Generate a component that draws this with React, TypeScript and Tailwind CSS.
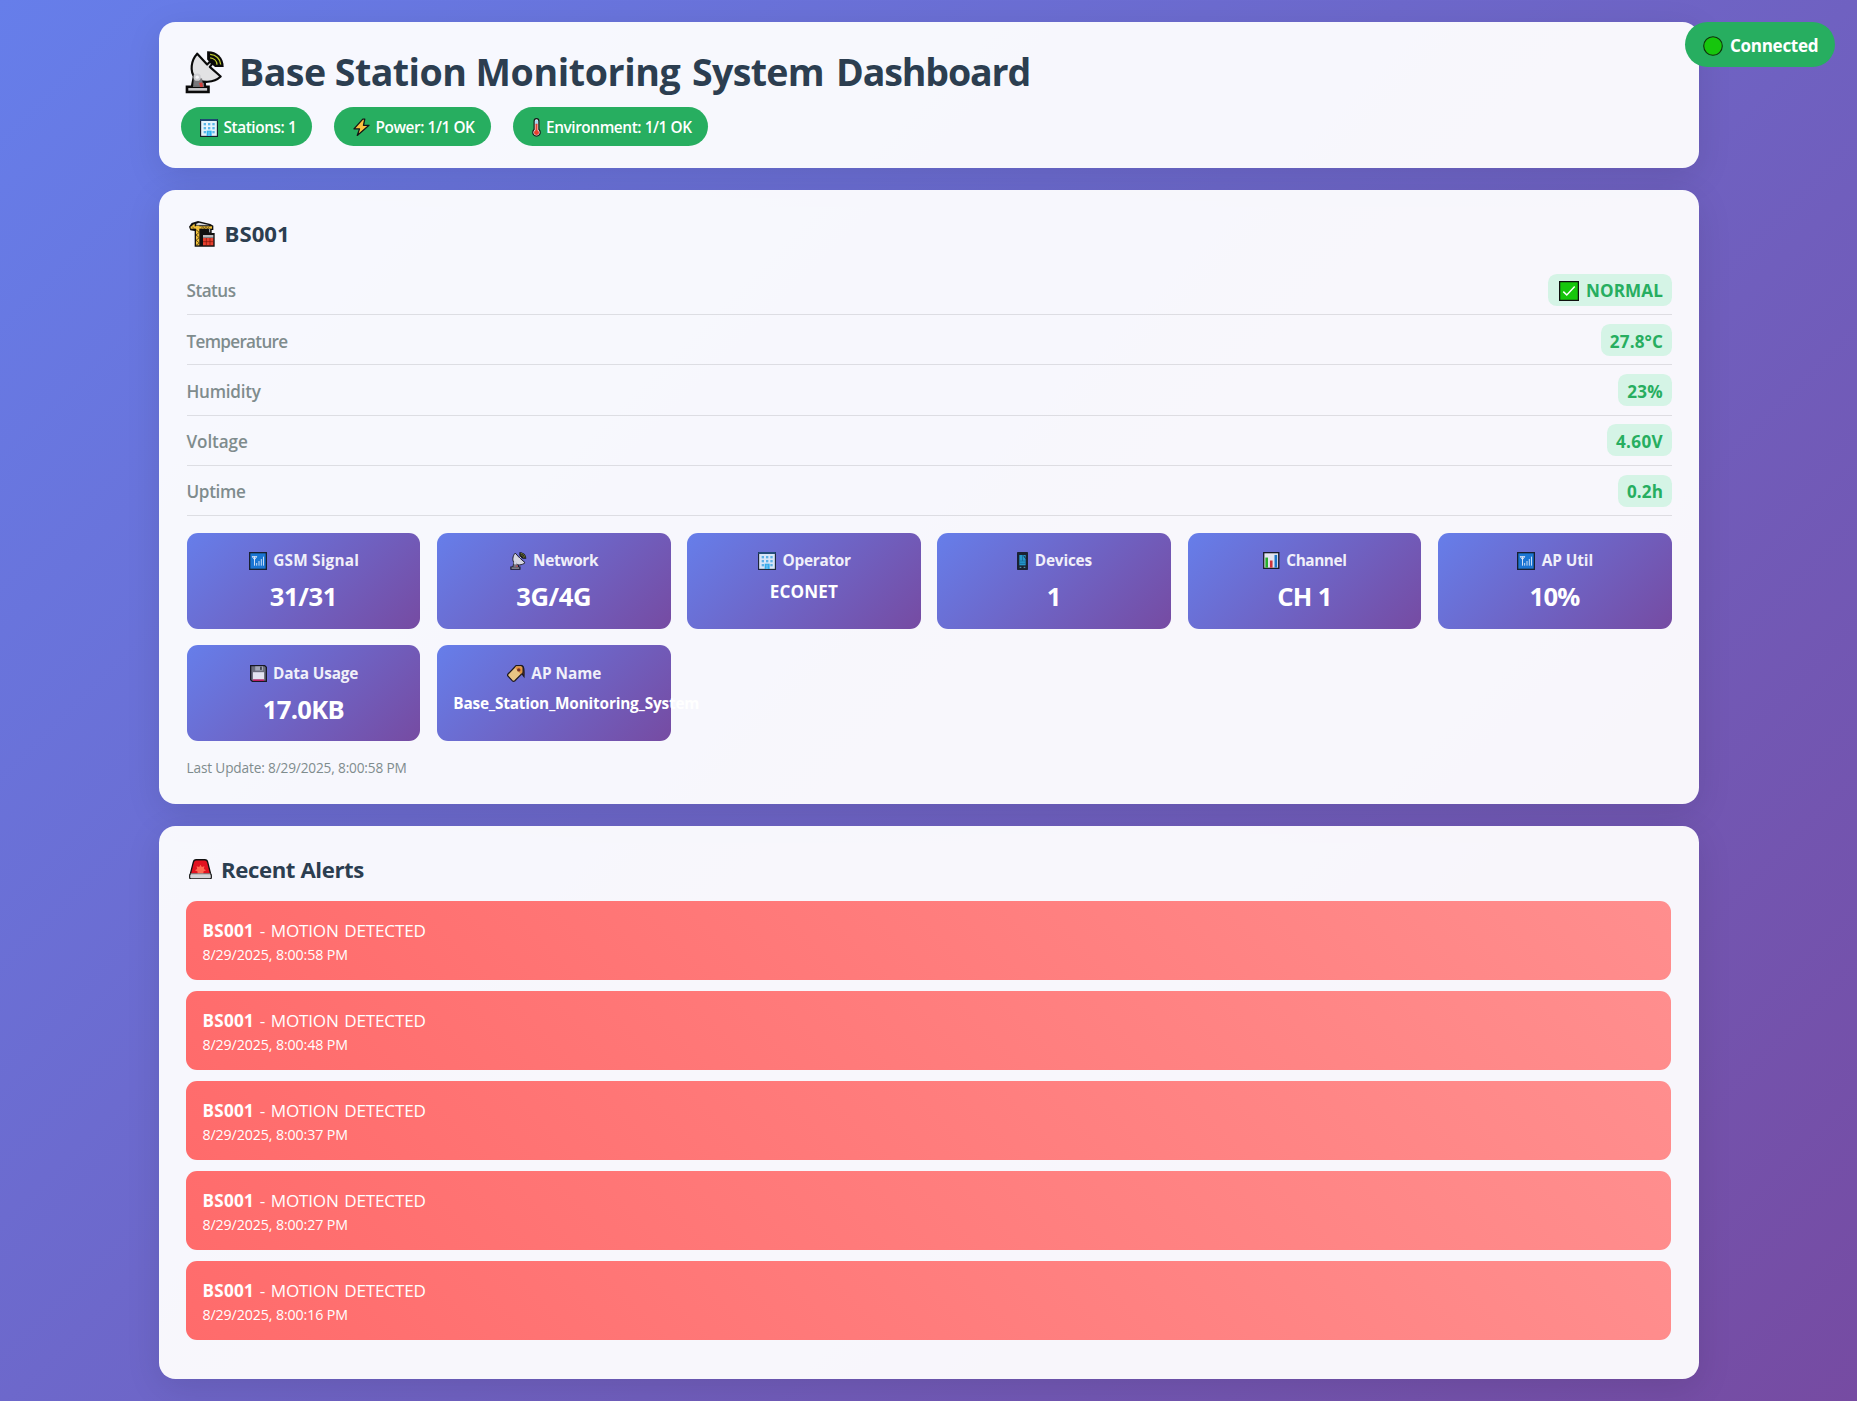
import React from "react";

type IconProps = { className?: string };

function DishIcon({ className = "" }: IconProps) {
  return (
    <svg viewBox="30 34 118 130" className={className} aria-hidden="true">
      <path d="M97 35 C126 34 147 53 147 82 L121 82 L108 72 L97 60 Z" fill="#0a0a0a" />
      <path d="M106 44 C124 45 137 58 138 75" fill="none" stroke="#c3cf2e" strokeWidth="4" />
      <path d="M106 55 C117 56 126 64 127 75" fill="none" stroke="#c3cf2e" strokeWidth="4" />
      <path d="M54 108 L48 138 L32 138 L32 162 L105 162 L105 138 L94 138 L92 118 Z" fill="#0a0a0a" />
      <path d="M60 112 L54 143 L88 143 L86 118 Z" fill="#6f6f72" />
      <path d="M72 131 L82 129 L84 143 L76 143 Z" fill="#d4403c" />
      <path d="M40 146 H97 V154 H40 Z" fill="#c9c9cc" />
      <path d="M67 42 C48 62 44 96 60 114 C80 134 118 130 138 111 L105 82 L113 72 L106 66 L97 75 Z" fill="#e2e2e4" stroke="#0a0a0a" strokeWidth="6.5" strokeLinejoin="round" />
      <path d="M56 104 L82 118 L84 138 L56 138 Z" fill="#77777b" />
      <path d="M72 131 L82 129 L84 140 L76 140 Z" fill="#d4403c" />
      <circle cx="67" cy="113" r="11" fill="#cfcfd3" />
      <circle cx="67" cy="113" r="5" fill="#f3f3f5" />
    </svg>
  );
}

function BuildingIcon({ className = "" }: IconProps) {
  const cols = [11, 24, 37];
  return (
    <svg viewBox="0 0 54 54" className={className} aria-hidden="true">
      <rect x="1.5" y="1.5" width="51" height="51" fill="#e4f3fc" stroke="#16202b" strokeWidth="4" />
      <rect x="1" y="0" width="52" height="6" fill="#1d4a72" />
      {[12, 24, 36].map((y) =>
        cols.map((x) => <rect key={`${x}-${y}`} x={x} y={y} width="7" height="7" fill="#5bb8ea" />)
      )}
      <path d="M20 35 H35 V51 H20 Z" fill="#2fb4ef" />
      <path d="M27 38 V51" stroke="#b8e6fb" strokeWidth="2" />
    </svg>
  );
}

function BoltIcon({ className = "" }: IconProps) {
  return (
    <svg viewBox="0 0 52 56" className={className} aria-hidden="true">
      <path d="M30 3 L3 33 L20 33 L13 53 L49 22 L32 22 L36 3 Z" fill="#fcc23f" stroke="#151515" strokeWidth="4" strokeLinejoin="round" />
    </svg>
  );
}

function ThermometerIcon({ className = "" }: IconProps) {
  return (
    <svg viewBox="0 0 26 56" className={className} aria-hidden="true">
      <path d="M6 9 a7 7 0 0 1 14 0 V34 a11 11 0 1 1 -14 0 Z" fill="#f1f3f5" stroke="#151515" strokeWidth="3.4" />
      <path d="M9 7 H17 V20 H9 Z" fill="#9ed8f3" />
      <path d="M10 17 H16 V36 a7.4 7.4 0 1 1 -6 0 Z" fill="#e6402f" />
    </svg>
  );
}

function CraneIcon({ className = "" }: IconProps) {
  return (
    <svg viewBox="0 0 78 78" className={className} aria-hidden="true">
      <path d="M0 17 L8 6 L27 0 L64 9 L73 14 V27 H68 V36 H77 V77 H17 V30 L4 28 Z" fill="#101010" />
      <path d="M5 20 L12 11 L17 9 V21 Z" fill="#f3c13a" />
      <path d="M22 8 L30 5 L62 13 H22 Z" fill="#d7d7d9" />
      <rect x="5" y="16" width="64" height="7" fill="#f3c13a" />
      <path d="M10 17 l5 6 M36 23 l5 -6 l5 6 l5 -6 l5 6 l5 -6" stroke="#3c2f0a" strokeWidth="2" fill="none" />
      <rect x="21" y="14" width="10" height="59" fill="#f3c13a" />
      <path d="M21 26 L31 34 L21 42 L31 50 L21 58 L31 66 L21 73" stroke="#3c2f0a" strokeWidth="2.2" fill="none" />
      <path d="M36 28 H57 V36 L52 40 H38 V46 H36 Z" fill="#101010" />
      <path d="M62 24 V34" stroke="#b9b9bd" strokeWidth="3" />
      <rect x="42" y="42" width="31" height="8" fill="#b9b9bd" />
      <rect x="42" y="51" width="31" height="22" fill="#e8412f" />
      <path d="M42 62 H73 M52 51 V73 M63 51 V73" stroke="#7d160c" strokeWidth="2" />
    </svg>
  );
}

function CheckIcon({ className = "" }: IconProps) {
  return (
    <svg viewBox="0 0 20 20" className={className} aria-hidden="true">
      <rect x="0.6" y="0.6" width="18.8" height="18.8" fill="#16c60c" stroke="#101010" strokeWidth="1.3" />
      <path d="M4.3 10.6 L7.8 14 L15.7 5.6" fill="none" stroke="#fff" strokeWidth="1.5" />
    </svg>
  );
}

function SignalIcon({ className = "" }: IconProps) {
  return (
    <svg viewBox="0 0 54 54" className={className} aria-hidden="true">
      <rect x="2" y="2" width="50" height="50" fill="#1377d4" stroke="#101820" strokeWidth="4" />
      <path d="M9 14 H24 M10 14 L16.5 23 L23 14 M16.5 14 V41" stroke="#fff" strokeWidth="2.6" fill="none" />
      <path d="M23 41 V33 M30 41 V27 M37 41 V21 M43.5 41 V14" stroke="#cfe6fa" strokeWidth="3" />
    </svg>
  );
}

function PhoneIcon({ className = "" }: IconProps) {
  return (
    <svg viewBox="0 0 33 54" className={className} aria-hidden="true">
      <rect x="0" y="0" width="33" height="54" rx="2" fill="#121a22" />
      <rect x="7" y="9" width="19" height="31" fill="#1d9ccd" />
      <path d="M7 27 H26 M16.5 9 V27 M7 34 H26" stroke="#0f5f86" strokeWidth="2" />
      <path d="M20 11 L26 20" stroke="#123" strokeWidth="3" />
      <path d="M8 46 H13 M20 46 H25" stroke="#58a9b8" strokeWidth="3" />
    </svg>
  );
}

function ChartIcon({ className = "" }: IconProps) {
  return (
    <svg viewBox="0 0 50 52" className={className} aria-hidden="true">
      <rect x="2" y="2" width="46" height="48" fill="#f2f2f4" stroke="#101418" strokeWidth="4" />
      <rect x="7" y="17" width="8" height="31" fill="#1fb51a" />
      <rect x="21" y="26" width="8" height="22" fill="#d9302c" />
      <rect x="35" y="9" width="8" height="39" fill="#1377c8" />
    </svg>
  );
}

function FloppyIcon({ className = "" }: IconProps) {
  return (
    <svg viewBox="0 0 52 52" className={className} aria-hidden="true">
      <path d="M2 2 H45 L50 7 V50 H7 L2 45 Z" fill="#6b6d73" stroke="#0f0f12" strokeWidth="4" />
      <rect x="16" y="4" width="24" height="13" fill="#a9acb3" />
      <rect x="31" y="5" width="5" height="10" fill="#33363c" />
      <rect x="9" y="22" width="34" height="23" fill="#f1f1f4" />
      <rect x="9" y="44" width="34" height="5" fill="#c2185b" />
    </svg>
  );
}

function TagIcon({ className = "" }: IconProps) {
  return (
    <svg viewBox="0 0 52 52" className={className} aria-hidden="true">
      <path d="M39 4 C49 4 50 14 49 36 L43 28" fill="#8c3a14" stroke="#17110c" strokeWidth="3.5" />
      <path d="M3 29 L26 5 H42 L46 9 V25 L22 49 C19 51 17 50 15 48 L3 35 C1 33 1 31 3 29 Z" fill="#f6cd7c" stroke="#17110c" strokeWidth="3.6" strokeLinejoin="round" />
      <path d="M26 7 H41 L44 10 V25 L39 29 L23 11 Z" fill="#f09a34" />
      <circle cx="34" cy="17" r="5" fill="#7a2d12" />
    </svg>
  );
}

function SirenIcon({ className = "" }: IconProps) {
  return (
    <svg viewBox="0 0 70 62" className={className} aria-hidden="true">
      <path d="M4 46 L13 10 C14 5 17 2 22 2 H48 C53 2 56 5 57 10 L66 46 Z" fill="#e2121f" stroke="#101010" strokeWidth="4" />
      <path d="M35 17 L39 24 L47 22 L45 30 L52 34 L44 38 L44 45 H26 L26 38 L18 34 L25 30 L23 22 L31 24 Z" fill="#ff6a52" />
      <rect x="2" y="46" width="66" height="14" rx="4" fill="#d4d4d7" stroke="#101010" strokeWidth="3.5" />
      <rect x="5" y="44" width="60" height="4" fill="#d4d4d7" />
    </svg>
  );
}

const card = "rounded-[16.5px] bg-white/95 shadow-[0_9px_35px_rgba(0,0,0,0.1)]";

const pills = [
  { text: "Stations: 1", box: "w-[131px]", icon: <BuildingIcon className="h-[18px] w-[18px]" />, gap: "gap-[6px]" },
  { text: "Power: 1/1 OK", box: "w-[157px]", icon: <BoltIcon className="h-[18.5px] w-[17px]" />, gap: "gap-[6px]" },
  { text: "Environment: 1/1 OK", box: "w-[195px]", icon: <ThermometerIcon className="h-[19px] w-[9px]" />, gap: "gap-[5.5px]" },
];

const rows = [
  { label: "Status", value: "NORMAL", check: true, box: "w-[124px]", ls: "tracking-[-0.5px]", vls: "tracking-[0.1px]" },
  { label: "Temperature", value: "27.8°C", box: "w-[71px]", ls: "tracking-[-0.68px]", vls: "tracking-[0.12px]" },
  { label: "Humidity", value: "23%", box: "w-[54px]", ls: "tracking-[-0.25px]", vls: "tracking-[0.3px]" },
  { label: "Voltage", value: "4.60V", box: "w-[65px]", ls: "tracking-[-0.1px]", vls: "tracking-[0.36px]" },
  { label: "Uptime", value: "0.2h", box: "w-[54px]", ls: "tracking-[-0.35px]", vls: "tracking-[0.1px]" },
];

const sq = "h-[18px] w-[18px]";
const big = "text-[25.6px] leading-[40px]";
const tiles = [
  { label: "GSM Signal", ls: "tracking-[0.2px]", icon: <SignalIcon className={sq} />, value: "31/31", cls: `${big} tracking-[-0.4px]` },
  { label: "Network", ls: "tracking-[-0.33px]", icon: <DishIcon className="h-[18px] w-[16.5px]" />, value: "3G/4G", cls: `${big} tracking-[-0.4px]` },
  { label: "Operator", ls: "tracking-[-0.3px]", icon: <BuildingIcon className={sq} />, value: "ECONET", cls: "text-[17.1px] leading-[30px] tracking-[0.1px]" },
  { label: "Devices", ls: "tracking-[-0.2px]", icon: <PhoneIcon className="h-[18px] w-[11px]" />, value: "1", cls: big },
  { label: "Channel", ls: "tracking-[-0.42px]", icon: <ChartIcon className="h-[17px] w-[16.5px]" />, value: "CH 1", cls: `${big} tracking-[-0.7px]` },
  { label: "AP Util", ls: "tracking-[-0.1px]", icon: <SignalIcon className={sq} />, value: "10%", cls: `${big} tracking-[-0.7px]` },
  { label: "Data Usage", ls: "tracking-[-0.17px]", icon: <FloppyIcon className="h-[17px] w-[17px]" />, value: "17.0KB", cls: "text-[25.6px] leading-[42px] tracking-[-0.7px]" },
  { label: "AP Name", ls: "tracking-[0px]", icon: <TagIcon className="h-[18px] w-[18px]" />, value: "Base_Station_Monitoring_System", cls: "text-[15.36px] leading-[30px] tracking-[-0.19px]" },
];

const alerts = ["8:00:58", "8:00:48", "8:00:37", "8:00:27", "8:00:16"];

export default function App() {
  return (
    <div className="relative min-h-screen bg-[linear-gradient(135deg,#667eea_0%,#764ba2_100%)] px-[159px] pt-[22px] font-['Open_Sans','Noto_Sans',sans-serif] text-[#2c3e50]">
      <div className="absolute top-[22px] left-[1685px] z-10 flex h-[45px] w-[150px] items-center rounded-full bg-[#27ae60] pt-[2px] pl-[18px] text-white">
        <svg viewBox="0 0 20 20" className="h-5 w-5" aria-hidden="true">
          <circle cx="10" cy="10" r="9.3" fill="#16c60c" stroke="#10300c" strokeWidth="1.1" />
        </svg>
        <span className="ml-[7px] text-[17.1px] leading-none font-bold tracking-[-0.33px]">Connected</span>
      </div>

      <main className="flex w-[1540px] flex-col gap-[22px]">
        <header className={`${card} h-[146px] px-[22px] pt-[23px]`}>
          <h1 className="flex h-[54px] items-center text-[37.56px] leading-[54px] font-bold tracking-[-0.54px] whitespace-nowrap">
            <DishIcon className="ml-[3.5px] h-[43px] w-[39px]" />
            <span className="ml-[15.5px]">
              Base Station <span className="tracking-[-0.4px]">Monitoring</span>{" "}
              <span className="ml-[2.5px] tracking-[-0.7px]">System</span>{" "}
              <span className="ml-[3px] tracking-[-1.15px]">Dashboard</span>
            </span>
          </h1>
          <div className="mt-[8px] flex gap-[22px]">
            {pills.map((p) => (
              <div key={p.text} className={`flex h-[39px] items-center rounded-full bg-[#27ae60] pt-[2px] pl-[18.5px] text-[15.36px] leading-none font-semibold tracking-[-0.42px] whitespace-nowrap text-white ${p.box} ${p.gap}`}>
                {p.icon}
                <span>{p.text}</span>
              </div>
            ))}
          </div>
        </header>

        <section className={`${card} h-[614px] px-[27.5px] pt-[27.5px]`}>
          <h2 className="flex h-8 items-center text-[22.2px] leading-8 font-bold tracking-[0px]">
            <CraneIcon className="ml-[2.5px] h-[26px] w-[26px]" />
            <span className="ml-[9.5px]">BS001</span>
          </h2>
          <div className="mt-[5px] flex flex-col pt-[10.4px]">
            {rows.map((r) => (
              <div key={r.label} className="flex h-[50.25px] items-center justify-between border-b border-black/10 text-[17.1px]">
                <span className={`pt-[3.5px] leading-8 font-semibold text-[#7f8c8d] ${r.ls}`}>{r.label}</span>
                <span className={`flex h-8 items-center justify-end rounded-[8.8px] bg-[#d5f4e6] pt-[3.5px] pr-[8.5px] leading-8 font-bold text-[#27ae60] ${r.box} ${r.vls}`}>
                  {r.check && <CheckIcon className="mr-[7px] h-5 w-5" />}
                  {r.value}
                </span>
              </div>
            ))}
          </div>
          <div className="mt-[16.6px] grid grid-cols-6 gap-x-[16.5px] gap-y-[16px]">
            {tiles.map((t) => (
              <div key={t.label} className="h-[96.3px] min-w-0 rounded-[11px] bg-[linear-gradient(135deg,#667eea_0%,#764ba2_100%)] px-[16.5px] pt-[17.5px] text-center text-white">
                <div className={`flex h-[21px] items-center justify-center gap-[6.5px] pl-px text-[15.36px] leading-[21px] font-bold opacity-90 ${t.ls}`}>
                  {t.icon}
                  <span>{t.label}</span>
                </div>
                <div className={`mt-[5.5px] font-bold whitespace-nowrap ${t.cls}`}>{t.value}</div>
              </div>
            ))}
          </div>
          <p className="mt-[16.5px] text-[13.66px] leading-[20px] tracking-[-0.16px] text-[#7f8c8d]">Last Update: 8/29/2025, 8:00:58 PM</p>
        </section>

        <section className={`${card} h-[553px] pr-[28px] pl-[27px] pt-[27.5px]`}>
          <h2 className="flex h-[31px] items-center text-[22.2px] leading-[31px] font-bold tracking-[-0.4px]">
            <SirenIcon className="ml-[3px] h-[20.5px] w-[23px]" />
            <span className="ml-[9px]">Recent Alerts</span>
          </h2>
          <div className="mt-[16.5px] flex flex-col gap-[11px]">
            {alerts.map((time) => (
              <div key={time} className="h-[79px] rounded-[11px] bg-[linear-gradient(45deg,#ff6b6b,#ff8e8e)] px-[16.5px] pt-[16.5px] text-white">
                <div className="text-[17.1px] leading-[25px] tracking-[-0.2px] [word-spacing:1.5px]">
                  <strong className="font-bold tracking-[0.25px]">BS001</strong> - MOTION DETECTED
                </div>
                <div className="text-[14.23px] leading-[24px] tracking-[-0.12px]">8/29/2025, {time} PM</div>
              </div>
            ))}
          </div>
        </section>
      </main>
    </div>
  );
}
